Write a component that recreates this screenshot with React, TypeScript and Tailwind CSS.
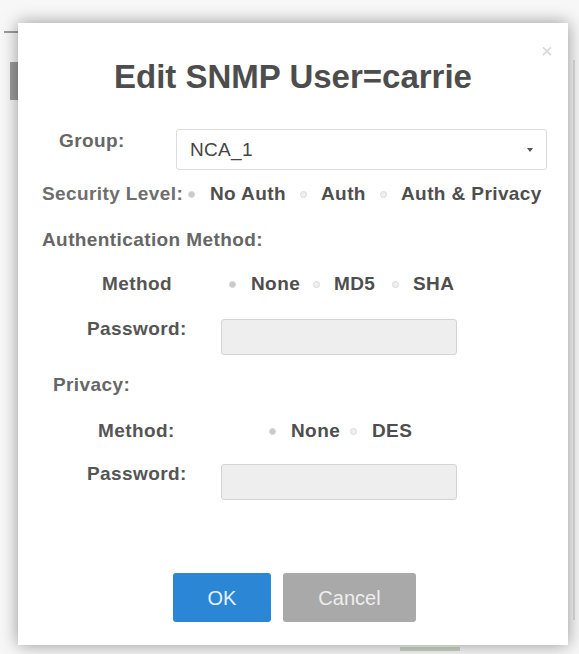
import React from "react";

function Radio({ label, checked, gap, w }: { label: string; checked?: boolean; gap: number; w?: number }) {
  return (
    <div className="flex items-center">
      <span
        className={
          checked
            ? "w-[7px] h-[7px] shrink-0 rounded-full bg-[#c9c9c9] border border-[#d6d6d6]"
            : "w-[7px] h-[7px] shrink-0 rounded-full bg-[#f0f0f0] border border-[#dadada]"
        }
      />
      <span className="text-[#4e4e4e] font-bold whitespace-nowrap" style={{ marginLeft: gap, width: w }}>
        {label}
      </span>
    </div>
  );
}

export default function App() {
  return (
    <div className="relative w-[579px] h-[654px] overflow-hidden bg-[#f7f7f7] font-['Liberation_Sans',Arial,sans-serif]">
      {/* background page fragments */}
      <div className="pt-[31px] pl-[4px]">
        <div className="w-[14px] h-[2px] bg-[#9a9a9a]" />
        <div className="mt-[29px] ml-[6px] w-[10px] h-[38px] bg-[#9c9c9c]" />
      </div>
      <div className="absolute right-[4px] top-[60px] w-[2px] h-[560px] bg-[#dcdcdc]" />
      <div className="absolute left-[400px] top-[647px] w-[60px] h-[4px] bg-[#c9d6c4]" />

      {/* modal */}
      <div className="absolute left-[18px] top-[23px] w-[550px] h-[622px] bg-white shadow-[0_0_16px_rgba(0,0,0,0.4)] text-[19px] leading-[24px] tracking-[0.4px]">
        <div className="absolute left-[523px] top-[18px] text-[#d6d6d6] text-[20px] leading-[20px] font-light tracking-normal">×</div>

        <div className="pt-[35px] h-[73px] text-center text-[33px] leading-[38px] font-bold text-[#4d4d4d] tracking-normal">
          Edit SNMP User=carrie
        </div>

        {/* Group */}
        <div className="mt-[33px] flex items-start">
          <div className="ml-[41px] w-[117px] font-bold text-[#666]">Group:</div>
          <div className="w-[371px] h-[41px] border border-[#dcdcdc] rounded-[3px] flex items-center justify-between pl-[13px] pr-[13px]">
            <span className="text-[19px] text-[#444] tracking-[0.3px]">NCA_1</span>
            <span className="w-0 h-0 border-l-[3px] border-r-[3px] border-t-[4px] border-l-transparent border-r-transparent border-t-[#555]" />
          </div>
        </div>

        {/* Security level */}
        <div className="mt-[12px] flex items-center pl-[24px]">
          <span className="w-[146px] font-bold text-[#6e6e6e] whitespace-nowrap">Security Level:</span>
          <Radio label="No Auth" checked gap={15} w={90} />
          <Radio label="Auth" gap={14} w={59} />
          <Radio label="Auth & Privacy" gap={14} />
        </div>

        {/* Authentication Method */}
        <div className="mt-[22px] pl-[24px] font-bold text-[#666]">Authentication Method:</div>

        <div className="mt-[20px] flex items-center">
          <div className="ml-[84px] w-[127px] font-bold text-[#555]">Method</div>
          <Radio label="None" checked gap={15} w={62} />
          <Radio label="MD5" gap={14} w={58} />
          <Radio label="SHA" gap={14} />
        </div>

        <div className="mt-[21px] flex items-start">
          <div className="ml-[69px] w-[134px] font-bold text-[#555]">Password:</div>
          <div className="mt-[2px] w-[236px] h-[36px] bg-[#eeeeee] border border-[#d4d4d4] rounded-[3px]" />
        </div>

        {/* Privacy */}
        <div className="mt-[18px] pl-[35px] font-bold text-[#666]">Privacy:</div>

        <div className="mt-[22px] flex items-center">
          <div className="ml-[80px] w-[171px] font-bold text-[#555]">Method:</div>
          <Radio label="None" checked gap={15} w={59} />
          <Radio label="DES" gap={15} />
        </div>

        <div className="mt-[19px] flex items-start">
          <div className="ml-[69px] w-[134px] font-bold text-[#555]">Password:</div>
          <div className="mt-[2px] w-[236px] h-[36px] bg-[#eeeeee] border border-[#d4d4d4] rounded-[3px]" />
        </div>

        {/* Buttons */}
        <div className="mt-[73px] flex pl-[155px] gap-[12px]">
          <button className="w-[98px] h-[49px] bg-[#2b86d6] rounded-[3px] text-[#e6f2ff] text-[20px] tracking-normal">OK</button>
          <button className="w-[133px] h-[49px] bg-[#a9a9a9] rounded-[3px] text-[#eeeeee] text-[20px] tracking-normal">Cancel</button>
        </div>
      </div>
    </div>
  );
}
